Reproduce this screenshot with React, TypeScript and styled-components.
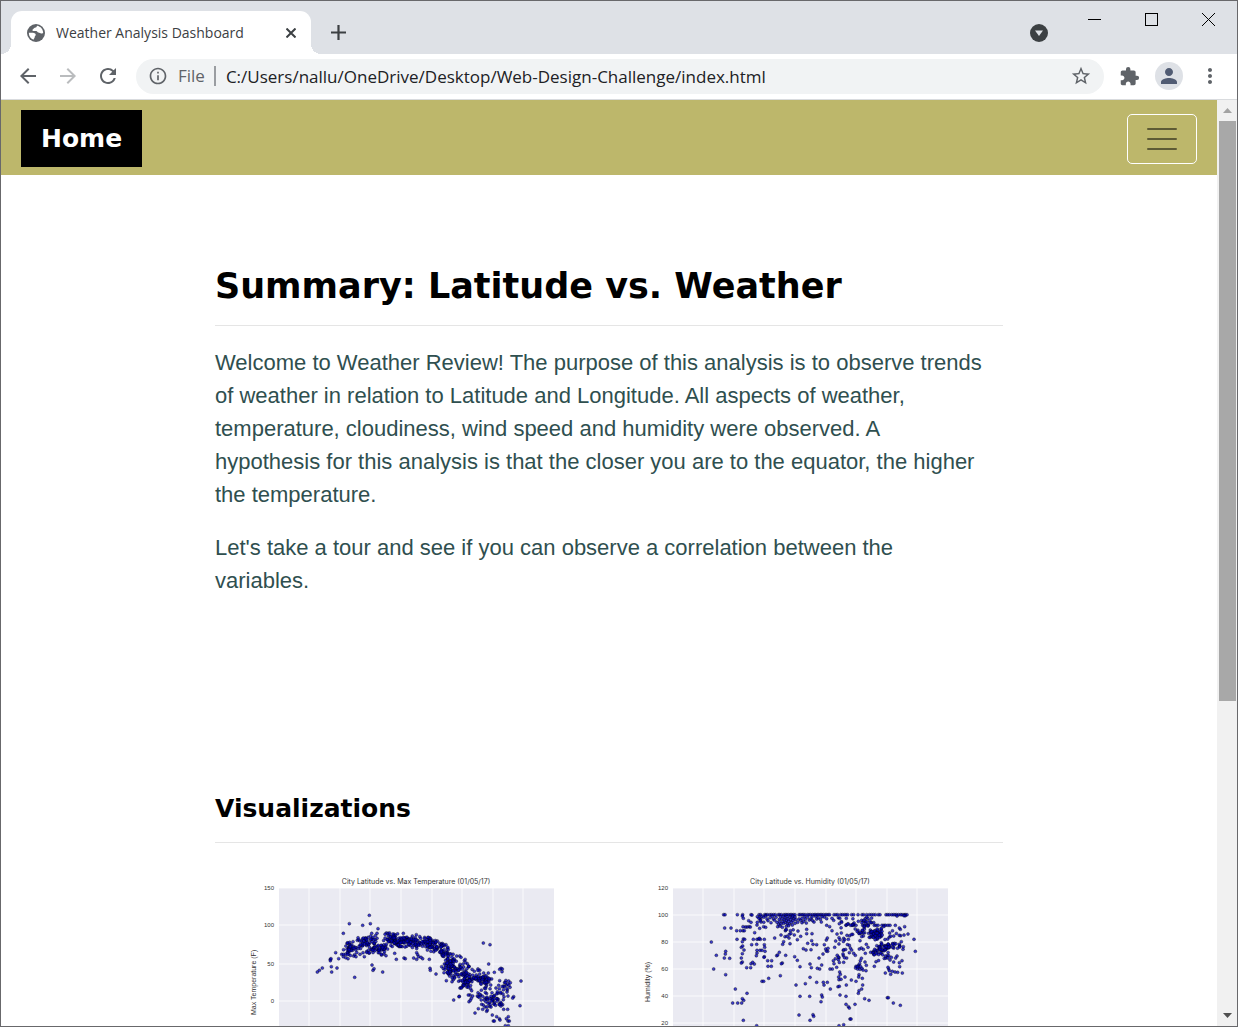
import React from "react";
import styled, { createGlobalStyle } from "styled-components";
import {
  MdArrowBack,
  MdArrowForward,
  MdRefresh,
  MdInfoOutline,
  MdStarBorder,
  MdExtension,
  MdPerson,
  MdMoreVert,
} from "react-icons/md";

const uiFont = `"Open Sans", "Noto Sans", sans-serif`;
const headingFont = `"DejaVu Sans", Verdana, sans-serif`;
const bodyFont = `"Liberation Sans", Arial, sans-serif`;

const GlobalStyle = createGlobalStyle`
  *, *::before, *::after { box-sizing: border-box; }
  body { margin: 0; background: #fff; font-family: ${bodyFont}; }
  button { border: 0; padding: 0; background: none; font: inherit; color: inherit; cursor: pointer; }
  svg { display: block; }
`;

const BrowserWindow = styled.div`
  display: flex;
  flex-direction: column;
  height: 100vh;
  border: 1px solid #68686b;
  overflow: hidden;
`;

const TabStrip = styled.header`
  display: flex;
  align-items: flex-end;
  flex: none;
  height: 53px;
  padding-left: 10px;
  background: #dee1e6;
  color: #3c4043;
`;

const Tab = styled.div`
  position: relative;
  display: flex;
  align-items: center;
  width: 300px;
  height: 43px;
  padding: 0 9px 0 16px;
  border-radius: 11px 11px 0 0;
  background: #fff;
  font: 14px/20px ${uiFont};

  &::before,
  &::after {
    content: "";
    position: absolute;
    bottom: 0;
    width: 10px;
    height: 10px;
  }
  &::before {
    right: 100%;
    background: radial-gradient(circle at 0 0, transparent 10px, #fff 10px);
  }
  &::after {
    left: 100%;
    background: radial-gradient(circle at 100% 0, transparent 10px, #fff 10px);
  }
`;

const Favicon = styled.span`
  margin-right: 11px;
`;

const TabTitle = styled.span`
  flex: 1;
  white-space: nowrap;
`;

const StripButton = styled.button`
  display: grid;
  place-items: center;
  width: 22px;
  height: 43px;
`;

const NewTab = styled(StripButton)`
  margin-left: 16px;
`;

const WindowButtons = styled.div`
  display: flex;
  align-self: stretch;
  align-items: flex-start;
  margin-left: auto;
`;

const TabSearch = styled(StripButton)`
  align-self: flex-end;
  margin-right: 16px;
`;

const CaptionButton = styled.button`
  display: grid;
  place-items: center;
  width: 57px;
  height: 37px;
  color: #000;
`;

const Toolbar = styled.div`
  display: flex;
  align-items: center;
  flex: none;
  height: 46px;
  padding: 0 15px 1px;
  border-bottom: 1px solid #d9dbde;
  background: #fff;
  color: #5f6368;
`;

const NavButton = styled.button`
  display: grid;
  place-items: center;
  width: 24px;
  height: 34px;
  margin-right: 16px;
  color: ${(p) => (p.disabled ? "#babcbe" : "#5f6368")};
`;

const AddressBar = styled.label`
  display: flex;
  align-items: center;
  flex: 1;
  height: 35px;
  margin-right: 15px;
  padding: 0 12px;
  border-radius: 18px;
  background: #f1f3f4;
  font: 17px/24px ${uiFont};
`;

const Scheme = styled.span`
  margin: 0 10px;
  padding-right: 9px;
  border-right: 2px solid #9a9da1;
  line-height: 20px;
`;

const AddressInput = styled.input`
  flex: 1;
  min-width: 0;
  height: 35px;
  padding: 1px 0 0;
  border: 0;
  outline: 0;
  background: transparent;
  color: #202124;
  font: inherit;
`;

const ToolbarActions = styled.div`
  display: flex;
  align-items: center;
  gap: 15px;
`;

const Avatar = styled.button`
  display: grid;
  place-items: center;
  width: 28px;
  height: 28px;
  border-radius: 50%;
  background: #dee1e6;
  color: #515c73;
`;

const Viewport = styled.div`
  display: flex;
  flex: 1;
  min-height: 0;
`;

const Page = styled.div`
  flex: 1;
  min-width: 0;
  overflow: hidden;
`;

const Navbar = styled.nav`
  display: flex;
  align-items: center;
  justify-content: space-between;
  padding: 10px 20px 8px;
  background: #bdb76b;
`;

const Brand = styled.a`
  padding: 10px 20px;
  background: #000;
  color: #fff;
  font: bold 25px/37px ${headingFont};
  text-decoration: none;
`;

const Toggler = styled.button`
  display: grid;
  place-items: center;
  width: 70px;
  height: 50px;
  border: 1px solid #fff;
  border-radius: 5px;
`;

const Main = styled.main`
  max-width: 788px;
  margin: 0 auto;
`;

const Section = styled.section<{ $top: number }>`
  padding-top: ${(p) => p.$top}px;
`;

const Title = styled.h1`
  margin: 0;
  padding-bottom: 17px;
  border-bottom: 1px solid #e5e5e5;
  color: #000;
  font: bold 35px/43px ${headingFont};
`;

const Subtitle = styled.h2`
  margin: 0;
  padding-bottom: 18px;
  border-bottom: 1px solid #e5e5e5;
  color: #000;
  font: bold 25px/31px ${headingFont};
`;

const Paragraph = styled.p`
  max-width: 770px;
  margin: 20px 0 0;
  color: #2f4f4f;
  font: 22px/33px ${bodyFont};
`;

const Charts = styled.div`
  display: grid;
  grid-template-columns: 1fr 1fr;
  padding-top: 27px;
`;

const ChartSvg = styled.svg`
  width: 100%;
  font-family: ${bodyFont};
  fill: #333;
`;

const ChartTitle = styled.text`
  font: 7px Inter, sans-serif;
`;

const ScrollBar = styled.div`
  display: flex;
  flex-direction: column;
  align-items: center;
  flex: none;
  width: 20px;
  background: #f1f1f1;
`;

const ScrollArrow = styled.button`
  display: grid;
  place-items: center;
  width: 20px;
  height: 21px;
`;

const ScrollTrack = styled.div`
  flex: 1;
  width: 17px;
`;

const ScrollThumb = styled.div`
  height: 65.6%;
  background: #a8a8a8;
`;

type Point = [number, number];
/* centre x, centre y, half width, half height, count */
type Cloud = [number, number, number, number, number];

const pairs = (s: string): Point[] =>
  s.trim().split(/\s+/).map((p) => p.split(",").map(Number) as Point);

const scatter = (clouds: Cloud[], seed: number): Point[] => {
  let state = seed;
  const next = () => {
    state = (state * 16807) % 2147483647;
    return state / 2147483647;
  };
  const spread = () => (next() + next() - 1) * 1.3;
  return clouds.flatMap(([cx, cy, rx, ry, n]) =>
    Array.from({ length: n }, (): Point => [cx + spread() * rx, cy + spread() * ry])
  );
};

const row = (y: number, xs: number[]): Point[] => xs.map((x) => [x, y]);

const temperature: Point[] = [
  ...pairs(`418,136 358,161 398,166 421,161 444,176 340,190 262,306 268,301 277,294 317,248 326,266
    321,294 304,290 305,306 301,268 301,272 303,266 374,322 426,285 429,301 432,296 458,306 335,253
    340,260 354,266 355,220 369,215 382,211 386,209 395,213 371,258 374,254 390,253 403,260 399,248
    425,190 441,190 469,189 474,190 478,194 520,190 547,198 559,194 441,205 468,257 462,252 499,268
    494,250 522,264 526,266 551,264 560,268 563,254 566,260 560,248 578,266 598,268 573,262 600,295
    601,301 618,312 635,290 640,296 648,224 642,308 649,332 666,335 760,219 780,224 776,282 873,333
    870,407 671,390 688,379 687,380 735,429 690,354 689,258 693,262 680,258 712,281 703,272 701,291
    813,295 817,297 809,298 816,305 793,307 775,309 761,309 836,333 841,338 851,380 848,384 840,352
    829,346 832,360 834,378 822,380 818,404 821,418 833,418 820,389 812,402 787,435 790,453 793,453
    800,440 808,446 810,450 829,446 835,440 834,453 838,453 826,467 835,467 755,403 745,416 758,418
    770,424 772,420 760,405 765,411 779,409 783,411 720,375 728,378 724,385 717,395 721,391 715,375
    742,378 745,380 768,350 770,345 770,325 806,346 809,332 821,348 808,356 786,368 790,380 801,386
    812,370 819,372 803,370 831,366 725,362 749,312 740,321 734,323 783,385 765,384 752,375 763,390`),
  ...scatter(
    [
      [353, 242, 15, 22, 14],
      [359, 233, 9, 15, 14],
      [380, 235, 20, 22, 14],
      [410, 214, 25, 18, 42],
      [432, 238, 34, 12, 28],
      [455, 238, 18, 16, 14],
      [487, 210, 26, 20, 60],
      [520, 214, 25, 20, 42],
      [558, 216, 28, 16, 48],
      [595, 214, 16, 14, 32],
      [618, 232, 23, 17, 38],
      [640, 246, 14, 20, 30],
      [661, 275, 16, 26, 42],
      [664, 305, 15, 22, 30],
      [692, 300, 24, 28, 38],
      [708, 338, 15, 20, 36],
      [728, 320, 22, 22, 24],
      [756, 328, 26, 12, 44],
      [775, 380, 36, 28, 26],
      [795, 400, 22, 20, 20],
      [825, 345, 16, 26, 10],
    ],
    4217
  ),
];

const humidity: Point[] = [
  ...row(134, [
    281, 285, 322, 338, 363, 387, 392, 404, 408, 413, 420, 425, 431, 436, 445, 449, 454, 462, 467, 471,
    476, 481, 485, 490, 495, 507, 511, 516, 520, 525, 532, 537, 542, 548, 553, 557, 562, 566, 571, 575,
    580, 586, 590, 595, 599, 612, 618, 623, 632, 637, 643, 648, 653, 665, 671, 684, 696, 701, 710, 718,
    724, 730, 736, 745, 750, 768, 773, 778, 785, 790, 795, 800, 806, 812, 816, 822, 826, 831,
  ]),
  ...row(166, [648, 666, 671, 678, 698, 703, 710, 715, 733, 738, 744, 756, 762, 767, 774, 780, 796]),
  /* just under saturation, so the band has a hard upper edge */
  ...pairs(`396,139 401,142 407,138 411,147 414,152 420,143 423,158 427,139 430,147 434,151 438,142
    441,157 443,170 446,163 448,148 449,155 452,140 453,162 456,147 458,155 460,139 461,160 463,149
    465,143 467,157 469,151 471,140 472,161 474,147 476,154 478,162 480,142 482,149 484,157 486,143
    488,138 489,152 492,146 495,141 498,149 503,157 507,147 512,151 516,145 516,158 521,154 524,140
    526,148 529,159 533,142 538,150 543,147 546,141 548,152 552,156 557,139 560,147 565,143 571,148
    576,140 574,156 583,141 590,146 450,168 457,172 469,169 476,167 487,165 495,160`),
  ...pairs(`244,216 251,297 259,256 284,174 303,174 287,244 286,252 283,264 299,265 287,314 316,357
    308,399 323,399 335,399 341,391 337,386 351,370 340,451 320,182 331,182 339,182 343,182 321,208
    337,138 340,145 356,152 363,157 357,170 351,171 346,171 361,171 374,188 381,165 382,157 339,170
    366,135 382,140 389,175 401,170 407,172 365,224 340,207 344,208 337,215 334,232 338,228 342,240
    337,251 334,264 337,276 334,279 350,293 362,293 363,281 373,282 368,277 370,208 381,208 386,207
    391,208 403,208 380,223 388,205 403,224 404,232 381,241 390,241 396,241 405,244 381,249 379,257
    403,260 402,262 413,272 425,272 414,289 424,289 440,257 443,255 448,247 457,279 454,281 467,256
    434,204 466,182 481,182 453,195 465,200 458,223 480,221 477,204 471,199 478,193 461,215 396,334
    401,334 416,325 451,317 494,260 502,271 510,290 498,345 526,341 510,379 539,379 540,322 560,337
    507,435 540,451 549,434 551,439 575,375 577,381 573,395 580,337 592,337 582,345 601,357 512,199
    502,209 530,178 530,191 546,191 533,220 545,212 520,236 528,240 543,239 560,224 549,223 540,282
    544,293 567,264 569,297 575,285 562,295 579,252 583,224 589,210 592,204 590,166 599,170 606,182
    621,192 593,244 589,243 587,237 594,235 607,297 600,297 610,272 616,266 620,292 612,281 627,263
    625,269 640,257 650,264 641,277 639,252 629,306 631,313 626,321 627,329 633,328 624,350 628,349
    645,321 649,345 630,375 648,379 675,403 648,403 655,410 658,414 660,447 663,447 641,464 627,467
    380,467 664,330 678,334 687,314 686,321 697,325 698,345 695,357 687,362 685,370 704,386 717,391
    772,383 775,383 790,399 811,406 708,302 709,286 705,276 691,272 689,281 685,286 678,289
    683,297 690,298 686,290 733,289 738,275 766,309 782,313 787,304 795,306 803,307 817,309 809,290
    816,272 776,297 778,302 774,292 801,258 797,264 808,278 791,276 784,262 780,270 819,238 820,230
    814,215 812,197 822,195 834,192 824,170 811,178 808,174 852,208 856,244 826,137 801,138 808,196
    822,137 695,151 685,154 649,145 625,143 611,151 606,145 641,205 644,209 655,208 651,196 668,193
    617,213 614,232 630,209 627,203 658,226 661,234 665,240 640,241 658,248 671,250 676,256 690,212
    688,237 694,234 700,238 706,250 722,247 714,232 709,223`),
  ...scatter(
    [
      [394, 152, 14, 12, 6],
      [475, 182, 30, 14, 6],
      [640, 158, 22, 14, 8],
      [690, 172, 26, 26, 18],
      [712, 158, 20, 16, 14],
      [735, 192, 20, 15, 42],
      [690, 192, 12, 10, 8],
      [770, 190, 26, 22, 14],
      [750, 236, 22, 15, 34],
      [785, 228, 26, 8, 26],
      [755, 258, 24, 12, 12],
      [690, 285, 14, 24, 6],
      [635, 235, 20, 36, 10],
    ],
    9091
  ),
];

interface ChartProps {
  title: string;
  axis: string;
  axisY: number;
  ticks: [string, number][];
  points: Point[];
  shift: number;
}

const gridColumns = [94, 125, 155, 186, 217, 247, 278, 308];

const Chart = ({ title, axis, axisY, ticks, points, shift }: ChartProps) => (
  <ChartSvg viewBox="0 0 394 240" role="img" aria-label={title}>
    <rect x="64" y="18" width="275" height="222" fill="#eaeaf2" />
    {gridColumns.map((x) => (
      <line key={x} x1={x} x2={x} y1="18" y2="240" stroke="#fff" strokeWidth="0.8" />
    ))}
    {ticks.map(([label, y]) => (
      <g key={label}>
        <line x1="64" x2="339" y1={y} y2={y} stroke="#fff" strokeWidth="0.8" />
        <text x="59" y={y + 2} fontSize="6" textAnchor="end">
          {label}
        </text>
      </g>
    ))}
    <ChartTitle x="201" y="14" textAnchor="middle">
      {title}
    </ChartTitle>
    <text transform={`translate(41 ${axisY}) rotate(-90)`} fontSize="7">
      {axis}
    </text>
    <g transform={`translate(${shift} 0)`} fill="#0000c0" fillOpacity="0.75" stroke="#000" strokeOpacity="0.6" strokeWidth="0.6">
      {points.map(([x, y], i) => (
        <circle key={i} cx={x / 3} cy={y / 3} r="1.5" />
      ))}
    </g>
  </ChartSvg>
);

export default function App() {
  return (
    <>
      <GlobalStyle />
      <BrowserWindow>
        <TabStrip>
          <Tab>
            <Favicon>
              <svg width="18" height="18" viewBox="0 0 18 18">
                <circle cx="9" cy="9" r="9" fill="#5f6368" />
                <path
                  d="M10 1.800C9.800 3.200 9 3.600 7.800 3.700C6.800 3.800 6.800 4.800 6 5.200C5 5.700 5.200 7 6.400 7H9.200C10.300 7 10.400 8.500 11.400 8.600C12.600 8.700 13 9.500 14.400 9.500C15.400 9.500 15.700 9.200 16.200 9C16.200 5.500 13.700 2.400 10 1.800Z"
                  fill="#fff"
                />
                <path
                  d="M1.800 8.800C3.500 9 6 8.600 7.600 9.300C9 9.900 9 11.200 8.200 11.900C7.300 12.600 8 13.500 7.300 14.200C6.800 14.700 6.600 15.200 6.600 15.800C3.800 14.800 1.800 12.200 1.800 8.800Z"
                  fill="#fff"
                />
              </svg>
            </Favicon>
            <TabTitle>Weather Analysis Dashboard</TabTitle>
            <StripButton aria-label="Close tab">
              <svg width="10" height="10" viewBox="0 0 10 10" stroke="currentColor" strokeWidth="2">
                <path d="M.5.5l9 9M9.500.5l-9 9" />
              </svg>
            </StripButton>
          </Tab>
          <NewTab aria-label="New tab">
            <svg width="15" height="15" viewBox="0 0 15 15" stroke="currentColor" strokeWidth="2.200">
              <path d="M7.500 0v15M0 7.500h15" />
            </svg>
          </NewTab>
          <WindowButtons>
            <TabSearch aria-label="Search tabs">
              <svg width="18" height="18" viewBox="0 0 18 18">
                <circle cx="9" cy="9" r="9" fill="#3c4043" />
                <path d="M5 6.500h8L9 12z" fill="#dee1e6" />
              </svg>
            </TabSearch>
            <CaptionButton aria-label="Minimize">
              <svg width="13" height="13" viewBox="0 0 13 13" stroke="currentColor">
                <path d="M0 6.500h13" />
              </svg>
            </CaptionButton>
            <CaptionButton aria-label="Maximize">
              <svg width="13" height="13" viewBox="0 0 13 13" stroke="currentColor" fill="none">
                <rect x=".5" y=".5" width="12" height="12" />
              </svg>
            </CaptionButton>
            <CaptionButton aria-label="Close">
              <svg width="13" height="13" viewBox="0 0 13 13" stroke="currentColor">
                <path d="M0 0l13 13M13 0L0 13" />
              </svg>
            </CaptionButton>
          </WindowButtons>
        </TabStrip>

        <Toolbar>
          <NavButton aria-label="Back">
            <MdArrowBack size={24} />
          </NavButton>
          <NavButton aria-label="Forward" disabled>
            <MdArrowForward size={24} />
          </NavButton>
          <NavButton aria-label="Reload">
            <MdRefresh size={24} />
          </NavButton>
          <AddressBar>
            <MdInfoOutline size={20} />
            <Scheme>File</Scheme>
            <AddressInput
              aria-label="Address"
              readOnly
              value="C:/Users/nallu/OneDrive/Desktop/Web-Design-Challenge/index.html"
            />
            <button aria-label="Bookmark this page">
              <MdStarBorder size={22} />
            </button>
          </AddressBar>
          <ToolbarActions>
            <button aria-label="Extensions">
              <MdExtension size={21} />
            </button>
            <Avatar aria-label="Profile">
              <MdPerson size={24} />
            </Avatar>
            <button aria-label="Menu">
              <MdMoreVert size={24} />
            </button>
          </ToolbarActions>
        </Toolbar>

        <Viewport>
          <Page>
            <Navbar>
              <Brand href="#">Home</Brand>
              <Toggler aria-label="Toggle navigation">
                <svg width="30" height="24" viewBox="0 0 30 24" stroke="#000" strokeOpacity="0.5" strokeWidth="2" strokeLinecap="round">
                  <path d="M1 2h28M1 12h28M1 22h28" />
                </svg>
              </Toggler>
            </Navbar>
            <Main>
              <Section $top={90}>
                <Title>Summary: Latitude vs. Weather</Title>
                <Paragraph>
                  Welcome to Weather Review! The purpose of this analysis is to observe trends of weather in
                  relation to Latitude and Longitude. All aspects of weather, temperature, cloudiness, wind
                  speed and humidity were observed. A hypothesis for this analysis is that the closer you are
                  to the equator, the higher the temperature.
                </Paragraph>
                <Paragraph>
                  Let's take a tour and see if you can observe a correlation between the variables.
                </Paragraph>
              </Section>
              <Section $top={196}>
                <Subtitle>Visualizations</Subtitle>
                <Charts>
                  <Chart
                    title="City Latitude vs. Max Temperature (01/05/17)"
                    axis="Max Temperature (F)"
                    axisY={145}
                    ticks={[["150", 18], ["100", 55], ["50", 94], ["0", 131]]}
                    points={temperature}
                    shift={15}
                  />
                  <Chart
                    title="City Latitude vs. Humidity (01/05/17)"
                    axis="Humidity (%)"
                    axisY={132}
                    ticks={[["120", 18], ["100", 45], ["80", 72], ["60", 99], ["40", 126], ["20", 153]]}
                    points={humidity}
                    shift={21}
                  />
                </Charts>
              </Section>
            </Main>
          </Page>
          <ScrollBar>
            <ScrollArrow aria-label="Scroll up">
              <svg width="9" height="5" viewBox="0 0 9 5" fill="#a3a3a3">
                <path d="M0 5h9L4.500 0z" />
              </svg>
            </ScrollArrow>
            <ScrollTrack>
              <ScrollThumb />
            </ScrollTrack>
            <ScrollArrow aria-label="Scroll down">
              <svg width="9" height="5" viewBox="0 0 9 5" fill="#505050">
                <path d="M0 0h9L4.500 5z" />
              </svg>
            </ScrollArrow>
          </ScrollBar>
        </Viewport>
      </BrowserWindow>
    </>
  );
}
